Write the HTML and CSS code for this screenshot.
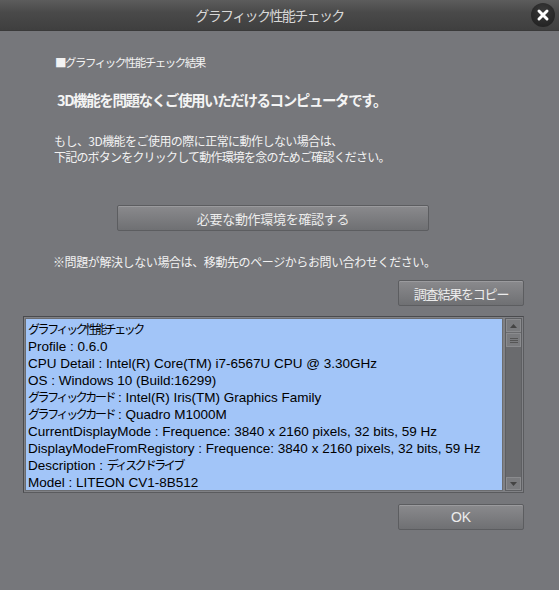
FILE: index.html
```html
<!DOCTYPE html>
<html lang="ja">
<head>
<meta charset="utf-8">
<link rel="stylesheet" href="styles.css">
</head>
<body>
<div class="window">
  <div class="titlebar">
    <span class="title">グラフィック性能チェック</span>
    <span class="close"><svg width="14" height="14" viewBox="0 0 14 14"><path d="M3 3 L11 11 M11 3 L3 11" stroke="#fff" stroke-width="3" stroke-linecap="round"/></svg></span>
  </div>
  <div class="content">
    <div class="heading">■グラフィック性能チェック結果</div>
    <div class="result">3D機能を問題なくご使用いただけるコンピュータです。</div>
    <div class="para"><span class="p1">もし、3D機能をご使用の際に正常に動作しない場合は、</span><br><span class="p2">下記のボタンをクリックして動作環境を念のためご確認ください。</span></div>
    <div class="btn wide">必要な動作環境を確認する</div>
    <div class="note">※問題が解決しない場合は、移動先のページからお問い合わせください。</div>
    <div class="row-right"><div class="btn small copy">調査結果をコピー</div></div>
    <div class="listbox">
      <div class="lines">
        <div class="line"><span class="jp">グラフィック性能チェック</span></div>
        <div class="line">Profile : 0.6.0</div>
        <div class="line">CPU Detail : Intel(R) Core(TM) i7-6567U CPU @ 3.30GHz</div>
        <div class="line">OS : Windows 10 (Build:16299)</div>
        <div class="line"><span class="jp">グラフィックカード</span> : Intel(R) Iris(TM) Graphics Family</div>
        <div class="line"><span class="jp">グラフィックカード</span> : Quadro M1000M</div>
        <div class="line">CurrentDisplayMode : Frequence: 3840 x 2160 pixels, 32 bits, 59 Hz</div>
        <div class="line">DisplayModeFromRegistory : Frequence: 3840 x 2160 pixels, 32 bits, 59 Hz</div>
        <div class="line">Description : <span class="jp">ディスク ドライブ</span></div>
        <div class="line">Model : LITEON CV1-8B512</div>
      </div>
      <div class="scrollbar">
        <div class="sb-btn"><svg width="7" height="4" viewBox="0 0 7 4"><path d="M0 4 L3.5 0 L7 4Z" fill="#444"/></svg></div>
        <div class="sb-thumb"><svg width="8" height="5" viewBox="0 0 8 5"><path d="M0 0.5H8M0 2.5H8M0 4.5H8" stroke="#555" stroke-width="1"/></svg></div>
        <div class="sb-track"></div>
        <div class="sb-btn"><svg width="7" height="4" viewBox="0 0 7 4"><path d="M0 0 L3.5 4 L7 0Z" fill="#444"/></svg></div>
      </div>
    </div>
    <div class="row-right ok-row"><div class="btn small ok">OK</div></div>
  </div>
</div>
</body>
</html>
```
FILE: styles.css
```css
html, body {
  margin: 0;
  padding: 0;
  background: #76777b;
}
body {
  width: 559px;
  height: 590px;
  overflow: hidden;
  font-family: "Noto Sans CJK JP", "Liberation Sans", sans-serif;
  color: #f2f2f2;
}
.window {
  display: flex;
  flex-direction: column;
}
.titlebar {
  height: 30px;
  background: linear-gradient(#5c5c5c, #4a4a4a 40%, #3f3f3f);
  border-bottom: 1px solid #3a3a3a;
  display: flex;
  align-items: center;
  justify-content: center;
  padding-right: 20px;
  position: relative;
}
.title {
  font-size: 14px;
  color: #d8d8d8;
  letter-spacing: -1.6px;
}
.close {
  position: absolute;
  right: 4px;
  top: 3px;
  width: 24px;
  height: 24px;
  border-radius: 50%;
  background: radial-gradient(circle at 50% 35%, #3a3a3a, #1d1d1d);
  display: flex;
  align-items: center;
  justify-content: center;
}
.content {
  padding: 22px 35px 0 23px;
  display: flex;
  flex-direction: column;
}
.heading {
  font-size: 11.5px;
  letter-spacing: -1.5px;
  margin-left: 32px;
  line-height: 18px;
}
.result {
  font-size: 14.5px;
  font-weight: bold;
  letter-spacing: -1.4px;
  margin-left: 34px;
  margin-top: 19px;
  line-height: 20px;
  color: #f4f4f4;
}
.para {
  font-size: 12px;
  margin-left: 31px;
  margin-top: 23px;
  line-height: 16px;
}
.p1 {
  letter-spacing: -0.55px;
}
.p2 {
  letter-spacing: -0.8px;
}
.btn {
  background: linear-gradient(#8a8a8d, #6f7073);
  border: 1px solid #5c5d60;
  border-radius: 2px;
  box-shadow: inset 0 1px 0 rgba(255,255,255,0.15);
  color: #ececec;
  display: flex;
  align-items: center;
  justify-content: center;
  box-sizing: border-box;
}
.wide {
  margin-left: 94px;
  width: 312px;
  height: 26px;
  margin-top: 40px;
  font-size: 13px;
  letter-spacing: -0.3px;
}
.note {
  font-size: 12px;
  letter-spacing: -0.4px;
  margin-left: 30px;
  margin-top: 23px;
  line-height: 16px;
}
.row-right {
  display: flex;
  justify-content: flex-end;
}
.small {
  width: 126px;
  height: 26px;
  font-size: 13px;
  margin-top: 9px;
}
.copy {
  letter-spacing: -1.2px;
  margin-top: 10px;
}
.listbox {
  margin-top: 10px;
  height: 177px;
  width: 501px;
  box-sizing: border-box;
  border: 1px solid #5a5b5e;
  border-top-color: #4a4b4e;
  border-left-color: #4a4b4e;
  background: #808185;
  display: flex;
  padding: 1px;
}
.lines {
  flex: 1;
  background: #a2c5f8;
  border: 1px solid #6c6d70;
  color: #000;
  font-family: "Liberation Sans", "Noto Sans CJK JP", sans-serif;
  font-size: 13.5px;
  line-height: 17px;
  padding: 2px 2px 0;
  overflow: hidden;
  white-space: nowrap;
}
.line {
  height: 17px;
  overflow: visible;
}
.jp {
  font-family: "Noto Sans CJK JP", sans-serif;
  font-size: 12px;
  line-height: 1;
  letter-spacing: -2.4px;
}
.scrollbar {
  width: 15px;
  margin-left: 2px;
  display: flex;
  flex-direction: column;
  background: #6a6b6e;
  border: 1px solid #5e5f62;
}
.sb-btn {
  height: 13px;
  background: #7a7b7e;
  border: 1px solid #8a8b8e;
  box-sizing: border-box;
  display: flex;
  align-items: center;
  justify-content: center;
}
.sb-thumb {
  height: 14px;
  margin-top: 1px;
  background: #7a7b7e;
  border: 1px solid #8a8b8e;
  box-sizing: border-box;
  display: flex;
  align-items: center;
  justify-content: center;
}
.sb-track {
  flex: 1;
}
.ok-row .ok {
  margin-top: 11px;
  font-size: 14px;
  font-family: "Liberation Sans", sans-serif;
}
```
